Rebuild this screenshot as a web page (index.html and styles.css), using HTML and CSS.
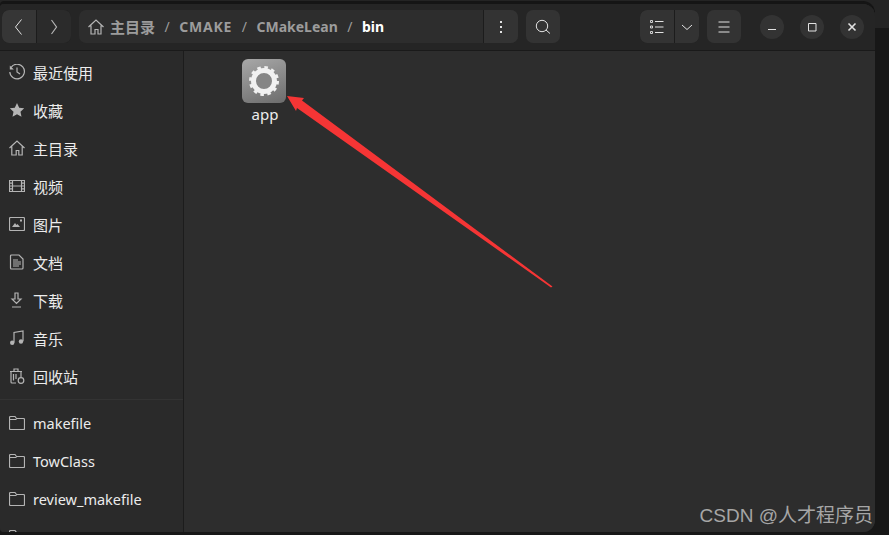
FILE: index.html
```html
<!DOCTYPE html>
<html lang="zh-CN">
<head>
    <meta charset="UTF-8">
    <meta name="viewport" content="width=device-width, initial-scale=1.0">
    <title>bin</title>
    <link rel="stylesheet" href="styles.css">
</head>
<body>
    <div class="window">
        <header class="header">
            <div class="btn-group nav-group">
                <button class="btn btn-w34 active"><svg width="16" height="16" viewBox="0 0 16 16"><path d="M10.5 0.5 4.5 8l6 7.5" class="line"/></svg></button>
                <button class="btn btn-w34"><svg width="16" height="16" viewBox="0 0 16 16"><path d="M5.5 1 10.5 8l-5 7" class="line dim"/></svg></button>
            </div>
            <div class="path-bar">
                <div class="crumbs">
                    <svg class="crumb-icon" width="16" height="16" viewBox="0 0 16 16"><path d="M0.5 8 8 1l7.5 7M3 6.5V15h4v-4.5h3V15h3V6.5" class="line dim"/></svg>
                    <span class="crumb cjk">主目录</span><span class="slash">/</span>
                    <span class="crumb caps">CMAKE</span><span class="slash">/</span>
                    <span class="crumb">CMakeLean</span><span class="slash">/</span>
                    <span class="crumb current">bin</span>
                </div>
                <button class="btn btn-w34 path-menu"><svg width="16" height="16" viewBox="0 0 16 16"><path d="M7 2h2v2H7zM7 7h2v2H7zM7 12h2v2H7z" class="fill"/></svg></button>
            </div>
            <button class="btn btn-w34 solo search"><svg width="16" height="16" viewBox="0 0 16 16"><circle cx="7" cy="7" r="5.7" class="line"/><path d="M11 11l4 3.5" class="line"/></svg></button>
            <div class="spacer"></div>
            <div class="btn-group">
                <button class="btn btn-w34"><svg width="16" height="16" viewBox="0 0 16 16"><path d="M1.5 1.5h2v2h-2zM1.5 7h2v2h-2zM1.5 12.500h2v2h-2z" class="line thin"/><path d="M6 2.500h8.500M6 8h8.500M6 13.500h8.500" class="line"/></svg></button>
                <button class="btn btn-w24"><svg width="16" height="16" viewBox="0 0 16 16"><path d="M3 6l5 4.500L13 6" class="line"/></svg></button>
            </div>
            <button class="btn btn-w34 solo menu"><svg width="16" height="16" viewBox="0 0 16 16"><path d="M2.500 3h11M2.500 8h11M2.500 13h11" class="line"/></svg></button>
            <div class="win-btns">
                <span class="win-btn"><svg width="16" height="16" viewBox="0 0 16 16"><path d="M4 10.500h8" class="line"/></svg></span>
                <span class="win-btn"><svg width="16" height="16" viewBox="0 0 16 16"><path d="M4.500 4.500h7.500v7.500H4.500z" class="line"/></svg></span>
                <span class="win-btn"><svg width="16" height="16" viewBox="0 0 16 16"><path d="M4.500 4.500l7 7M11.500 4.500l-7 7" class="line bold"/></svg></span>
            </div>
        </header>

        <div class="body-row">
            <nav class="sidebar">
                <a class="side-item"><svg width="16" height="16" viewBox="0 0 16 16"><path d="M2 3.500A7.300 7.300 0 1 1 0.800 8" class="line dim"/><path d="M0.800 1.500v4h4z" class="fill dim"/><path d="M8 3.500V8l3 2" class="line dim"/></svg>最近使用</a>
                <a class="side-item"><svg width="16" height="16" viewBox="0 0 16 16"><path d="M8 1l2.200 4.700 5 .6-3.700 3.400 1 5L8 12.200 3.500 14.700l1-5L.800 6.300l5-.6z" class="fill dim"/></svg>收藏</a>
                <a class="side-item"><svg width="16" height="16" viewBox="0 0 16 16"><path d="M0.500 8 8 1l7.500 7M2.800 6.500V15h4.400v-4.500h2.600V15h3.400V6.500" class="line dim"/></svg>主目录</a>
                <a class="side-item"><svg width="16" height="16" viewBox="0 0 16 16"><path d="M0.500 2.500h15v11H.5zM3.500 2.500v11M12.500 2.500v11M3.500 8h9M.5 5.200h3M.5 8h3M.5 10.800h3M12.500 5.200h3M12.500 8h3M12.500 10.800h3" class="line dim"/></svg>视频</a>
                <a class="side-item"><svg width="16" height="16" viewBox="0 0 16 16"><path d="M1.500 1.500h13a1 1 0 0 1 1 1v11a1 1 0 0 1-1 1h-13a1 1 0 0 1-1-1v-11a1 1 0 0 1 1-1z" class="line dim"/><path d="M3 11l3-4 1.500 2 1-1 2.500 3zM11 3.500h2v2h-2z" class="fill dim"/></svg>图片</a>
                <a class="side-item"><svg width="16" height="16" viewBox="0 0 16 16"><path d="M2.500 1h7.500l4 4v9a1 1 0 0 1-1 1H2.500a1 1 0 0 1-1-1V2a1 1 0 0 1 1-1zM4 6h5M4 8h8M4 10h8M4 12h6" class="line dim"/></svg>文档</a>
                <a class="side-item"><svg width="16" height="16" viewBox="0 0 16 16"><path d="M6 1h3v6h3L7.500 11.500 3 7h3zM3 15h9" class="line dim"/></svg>下载</a>
                <a class="side-item"><svg width="16" height="16" viewBox="0 0 16 16"><path d="M5 12.500V2.500l9-1.500v10" class="line dim"/><circle cx="3.200" cy="12.800" r="2.200" class="fill dim"/><circle cx="12" cy="11.500" r="2.200" class="fill dim"/></svg>音乐</a>
                <a class="side-item"><svg width="16" height="16" viewBox="0 0 16 16"><path d="M1 3.500h12M5 3.500V1h4v2.500M2 3.500V14a1 1 0 0 0 1 1h4M12 3.500V9M4.500 6v6.500M7 6v5" class="line dim"/><circle cx="12" cy="12.500" r="2.800" class="line dim"/></svg>回收站</a>
                <div class="side-sep"></div>
                <a class="side-item latin"><svg width="16" height="16" viewBox="0 0 16 16"><path d="M1.500 1.500h4.500l1.500 2h7a1 1 0 0 1 1 1v9a1 1 0 0 1-1 1h-13a1 1 0 0 1-1-1v-11a1 1 0 0 1 1-1zM.5 4.500h7" class="line dim"/></svg>makefile</a>
                <a class="side-item latin"><svg width="16" height="16" viewBox="0 0 16 16"><path d="M1.500 1.500h4.500l1.500 2h7a1 1 0 0 1 1 1v9a1 1 0 0 1-1 1h-13a1 1 0 0 1-1-1v-11a1 1 0 0 1 1-1zM.5 4.500h7" class="line dim"/></svg>TowClass</a>
                <a class="side-item latin"><svg width="16" height="16" viewBox="0 0 16 16"><path d="M1.500 1.500h4.500l1.500 2h7a1 1 0 0 1 1 1v9a1 1 0 0 1-1 1h-13a1 1 0 0 1-1-1v-11a1 1 0 0 1 1-1zM.5 4.500h7" class="line dim"/></svg>review_makefile</a>
                <a class="side-item latin"><svg width="16" height="16" viewBox="0 0 16 16"><path d="M1.500 1.500h4.500l1.500 2h7a1 1 0 0 1 1 1v9a1 1 0 0 1-1 1h-13a1 1 0 0 1-1-1v-11a1 1 0 0 1 1-1zM.5 4.500h7" class="line dim"/></svg>bin</a>
            </nav>

            <main class="files">
                <div class="file">
                    <div class="app-icon">
                        <svg width="34" height="34" viewBox="0 0 34 34">
                            <circle cx="17" cy="17" r="13.500" class="gear-teeth"/>
                            <circle cx="17" cy="17" r="10.500" class="gear-ring"/>
                        </svg>
                    </div>
                    <span class="file-name">app</span>
                </div>
            </main>
        </div>
    </div>

    <svg class="arrow" width="889" height="535" viewBox="0 0 889 535">
        <path d="M287 96 304 98 302 100.500 552.500 286.500 551 287.500 297 108 296 111z" fill="#f53535"/>
    </svg>
    <div class="watermark">CSDN @人才程序员</div>
</body>
</html>
```

FILE: styles.css
```css
* {
    box-sizing: border-box;
}
html, body {
    height: 100%;
}
body {
    margin: 0;
    overflow: hidden;
    background: linear-gradient(#242424 0, #242424 28px, #171717 28px);
    font-family: "Noto Sans", "Noto Sans CJK SC", sans-serif;
    font-size: 15px;
}
.window {
    width: 875px;
    height: 528px;
    margin-top: 4px;
    background: #2c2c2c;
    border-radius: 4px 12px 12px 4px;
    overflow: hidden;
    display: flex;
    flex-direction: column;
    box-shadow: 0 -3px 0 #151515;
}

/* header bar */
.header {
    height: 47px;
    flex: none;
    display: flex;
    align-items: center;
    padding: 0 11px 1px 2px;
    background: #252525;
    border-bottom: 1px solid #1a1a1a;
}
.btn {
    height: 33px;
    padding: 0;
    border: none;
    display: flex;
    align-items: center;
    justify-content: center;
    background: #333;
}
.btn-w34 {
    width: 34px;
}
.btn-w24 {
    width: 24px;
}
.btn-group {
    display: flex;
    gap: 1px;
    background: #1c1c1c;
    border-radius: 7px;
    overflow: hidden;
}
.nav-group .btn {
    background: #2b2b2b;
}
.nav-group .btn.active {
    background: #363636;
}
.solo {
    border-radius: 7px;
}
.search {
    margin-left: 8px;
}
.menu {
    margin-left: 8px;
}
.spacer {
    flex: 1;
}
.path-bar {
    width: 439px;
    height: 33px;
    margin-left: 8px;
    display: flex;
    background: #2d2d2d;
    border-radius: 7px;
    overflow: hidden;
}
.crumbs {
    flex: 1;
    display: flex;
    align-items: center;
    padding-left: 9px;
    font-weight: 700;
    font-size: 14px;
    color: #9c9c9c;
}
.crumb-icon {
    margin-right: 6px;
}
.cjk {
    font-size: 15px;
}
.caps {
    letter-spacing: 0.8px;
}
.slash {
    margin: 0 9.500px;
    font-weight: 400;
}
.current {
    color: #fff;
}
.path-menu {
    border-left: 1px solid #1c1c1c;
    width: 35px;
}
.win-btns {
    display: flex;
    gap: 16px;
    margin-left: 19px;
}
.win-btn {
    width: 24px;
    height: 24px;
    border-radius: 50%;
    background: #333;
    display: flex;
    align-items: center;
    justify-content: center;
}

/* svg strokes */
.line {
    fill: none;
    stroke: #e2e2e2;
    stroke-width: 1;
}
.line.thin {
    stroke-width: 0.9;
}
.line.bold {
    stroke-width: 1.600;
}
.line.dim {
    stroke: #b4b4b4;
    stroke-width: 1.200;
}
.fill {
    fill: #e2e2e2;
}
.fill.dim {
    fill: #b4b4b4;
}

/* content */
.body-row {
    flex: 1;
    min-height: 0;
    display: flex;
}
.sidebar {
    width: 184px;
    flex: none;
    padding-top: 2px;
    background: #2a2a2a;
    border-right: 1px solid #1c1c1c;
    color: #ececec;
    overflow: hidden;
}
.side-item {
    height: 38px;
    display: flex;
    align-items: center;
    gap: 8px;
    padding-left: 9px;
    white-space: nowrap;
}
.side-item.latin {
    font-size: 14.500px;
}
.side-item svg {
    flex: none;
}
.side-sep {
    height: 9px;
    background: linear-gradient(transparent 4px, #333 4px, #333 5px, transparent 5px);
}
.files {
    flex: 1;
    padding: 8px 0 0 58px;
    background: #2d2d2d;
}
.file {
    width: 44px;
    display: flex;
    flex-direction: column;
    align-items: center;
}
.app-icon {
    width: 44px;
    height: 44px;
    border-radius: 6px;
    display: flex;
    align-items: center;
    justify-content: center;
    background: linear-gradient(160deg, #a8a8a8, #6c6c6c);
}
.gear-teeth {
    fill: none;
    stroke: #f1f1f1;
    stroke-width: 3;
    stroke-dasharray: 3.530 3.530;
}
.gear-ring {
    fill: #868686;
    stroke: #f1f1f1;
    stroke-width: 5;
}
.file-name {
    margin-top: 1px;
    margin-left: 2px;
    color: #ececec;
    font-size: 15px;
}

/* annotations on top of the screenshot */
.arrow {
    position: absolute;
    left: 0;
    top: 0;
    pointer-events: none;
}
.watermark {
    position: absolute;
    right: 16px;
    top: 500px;
    font-family: "Liberation Sans", "Noto Sans CJK SC", sans-serif;
    font-size: 19px;
    color: #a6a6a6;
    white-space: nowrap;
}
```
